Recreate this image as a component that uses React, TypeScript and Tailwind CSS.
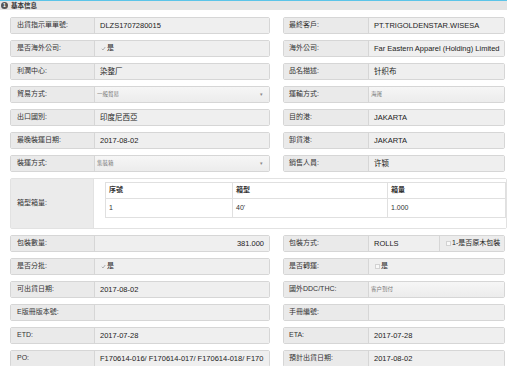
import React from "react"

const FONT = "font-['Liberation_Sans','Noto_Sans_CJK_TC',sans-serif]"

type Kind = "text" | "select" | "check" | "uncheck" | "num" | "empty"

function Value({ kind = "text", text = "", arrow = false }: { kind?: Kind; text?: string; arrow?: boolean }) {
  if (kind === "select") {
    return (
      <div className="flex-1 flex items-center justify-between pl-[2px] pr-[6px] bg-gradient-to-b from-[#f6f6f6] to-[#ececec] border-l border-[#d6d6d6] overflow-hidden">
        <span className="text-[5.5px] text-[#777] whitespace-nowrap">{text}</span>
        {arrow && <span className="text-[5px] text-[#888]">▾</span>}
      </div>
    )
  }
  if (kind === "check" || kind === "uncheck") {
    return (
      <div className="flex-1 flex items-center pl-[6px] gap-[1px] bg-[#efefef] border-l border-[#d6d6d6]">
        {kind === "check" ? (
          <svg width="5" height="5" viewBox="0 0 10 10">
            <path d="M1.5 5.5 L4 8 L8.5 2" stroke="#9a9a9a" strokeWidth="1.5" fill="none" />
          </svg>
        ) : (
          <span className="w-[5px] h-[5px] border border-[#d2d2d2] bg-[#f8f8f8]" />
        )}
        <span className="text-[7px] text-[#222]">{text}</span>
      </div>
    )
  }
  return (
    <div
      className={`flex-1 min-w-0 flex items-center bg-[#efefef] border-l border-[#d6d6d6] overflow-hidden ${
        kind === "num" ? "justify-end pr-[5px]" : "pl-[5px]"
      }`}
    >
      <span className="text-[7.5px] text-[#222] whitespace-nowrap">{text}</span>
    </div>
  )
}

function Field({
  label,
  wide = false,
  children,
}: {
  label: string
  wide?: boolean
  children: React.ReactNode
}) {
  return (
    <div
      className={`flex h-[17px] border border-[#d6d6d6] rounded-[2px] overflow-hidden ${
        wide ? "w-[260px]" : "flex-1 min-w-0"
      }`}
    >
      <div className={`shrink-0 flex items-center bg-[#eaeaea] ${wide ? "w-[83px] pl-[6px]" : "w-[84px] pl-[5px]"}`}>
        <span className="text-[7px] text-[#333] whitespace-nowrap">{label}</span>
      </div>
      {children}
    </div>
  )
}

function Row({ children }: { children: React.ReactNode }) {
  return <div className="flex gap-[13px]">{children}</div>
}

export default function App() {
  return (
    <div className={`w-[507px] h-[366px] overflow-hidden bg-white ${FONT}`}>
      {/* Section header */}
      <div className="h-[10px] border-t border-[#5cc4e8] bg-[#e5e5e5] flex items-center gap-[3px] pl-[1px]">
        <span className="w-[7px] h-[7px] rounded-full bg-[#555] text-white text-[5px] leading-none flex items-center justify-center font-bold">
          1
        </span>
        <span className="text-[6.5px] text-[#333] font-bold">基本信息</span>
      </div>

      <div className="flex flex-col gap-[6px] pt-[7px] pl-[10px] pr-[2px]">
        <Row>
          <Field label="出貨指示單單號:" wide>
            <Value text="DLZS1707280015" />
          </Field>
          <Field label="最終客戶:">
            <Value text="PT.TRIGOLDENSTAR.WISESA" />
          </Field>
        </Row>
        <Row>
          <Field label="是否海外公司:" wide>
            <Value kind="check" text="是" />
          </Field>
          <Field label="海外公司:">
            <Value text="Far Eastern Apparel (Holding) Limited" />
          </Field>
        </Row>
        <Row>
          <Field label="利潤中心:" wide>
            <Value text="染整厂" />
          </Field>
          <Field label="品名描述:">
            <Value text="针织布" />
          </Field>
        </Row>
        <Row>
          <Field label="貿易方式:" wide>
            <Value kind="select" text="一般貿易" arrow />
          </Field>
          <Field label="運輸方式:">
            <Value kind="select" text="海運" />
          </Field>
        </Row>
        <Row>
          <Field label="出口國別:" wide>
            <Value text="印度尼西亞" />
          </Field>
          <Field label="目的港:">
            <Value text="JAKARTA" />
          </Field>
        </Row>
        <Row>
          <Field label="最晚裝運日期:" wide>
            <Value text="2017-08-02" />
          </Field>
          <Field label="卸貨港:">
            <Value text="JAKARTA" />
          </Field>
        </Row>
        <Row>
          <Field label="裝運方式:" wide>
            <Value kind="select" text="集裝箱" arrow />
          </Field>
          <Field label="銷售人員:">
            <Value text="许颖" />
          </Field>
        </Row>

        {/* 箱型箱量 table */}
        <div className="flex h-[51px] border border-[#e2e2e2] rounded-[2px] -mr-[2px]">
          <div className="w-[83px] bg-[#ebebeb] flex items-center pl-[6px] border-r border-[#e2e2e2]">
            <span className="text-[7px] text-[#333]">箱型箱量:</span>
          </div>
          <div className="flex-1 bg-white pt-[3px] pl-[11px]">
            <div className="border border-[#e0e0e0] text-[7px] text-[#333]">
              <div className="flex h-[16px] border-b border-[#e0e0e0] font-bold">
                <div className="w-[127px] flex items-center pl-[3px] border-r border-[#e0e0e0]">序號</div>
                <div className="w-[155px] flex items-center pl-[3px] border-r border-[#e0e0e0]">箱型</div>
                <div className="flex-1 flex items-center pl-[3px]">箱量</div>
              </div>
              <div className="flex h-[18px]">
                <div className="w-[127px] flex items-center pl-[3px] border-r border-[#e0e0e0]">1</div>
                <div className="w-[155px] flex items-center pl-[3px] border-r border-[#e0e0e0]">40'</div>
                <div className="flex-1 flex items-center pl-[3px]">1.000</div>
              </div>
            </div>
          </div>
        </div>

        <Row>
          <Field label="包裝數量:" wide>
            <Value kind="num" text="381.000" />
          </Field>
          <Field label="包裝方式:">
            <div className="w-[71px] shrink-0 flex items-center pl-[5px] bg-[#efefef] border-l border-[#d6d6d6]">
              <span className="text-[7.5px] text-[#222]">ROLLS</span>
            </div>
            <div className="flex-1 min-w-0 flex items-center pl-[6px] gap-[1px] bg-[#ececec] border-l border-[#d6d6d6]">
              <span className="w-[5px] h-[5px] border border-[#d2d2d2] bg-[#f8f8f8]" />
              <span className="text-[7px] text-[#222] whitespace-nowrap">1-是否原木包裝</span>
            </div>
          </Field>
        </Row>
        <Row>
          <Field label="是否分批:" wide>
            <Value kind="check" text="是" />
          </Field>
          <Field label="是否轉運:">
            <Value kind="uncheck" text="是" />
          </Field>
        </Row>
        <Row>
          <Field label="可出貨日期:" wide>
            <Value text="2017-08-02" />
          </Field>
          <Field label="國外DDC/THC:">
            <Value kind="select" text="客户到付" />
          </Field>
        </Row>
        <Row>
          <Field label="E版冊版本號:" wide>
            <Value kind="empty" />
          </Field>
          <Field label="手冊編號:">
            <Value kind="empty" />
          </Field>
        </Row>
        <Row>
          <Field label="ETD:" wide>
            <Value text="2017-07-28" />
          </Field>
          <Field label="ETA:">
            <Value text="2017-07-28" />
          </Field>
        </Row>
        <Row>
          <Field label="PO:" wide>
            <Value text="F170614-016/ F170614-017/ F170614-018/ F170" />
          </Field>
          <Field label="預計出貨日期:">
            <Value text="2017-08-02" />
          </Field>
        </Row>
      </div>
    </div>
  )
}
